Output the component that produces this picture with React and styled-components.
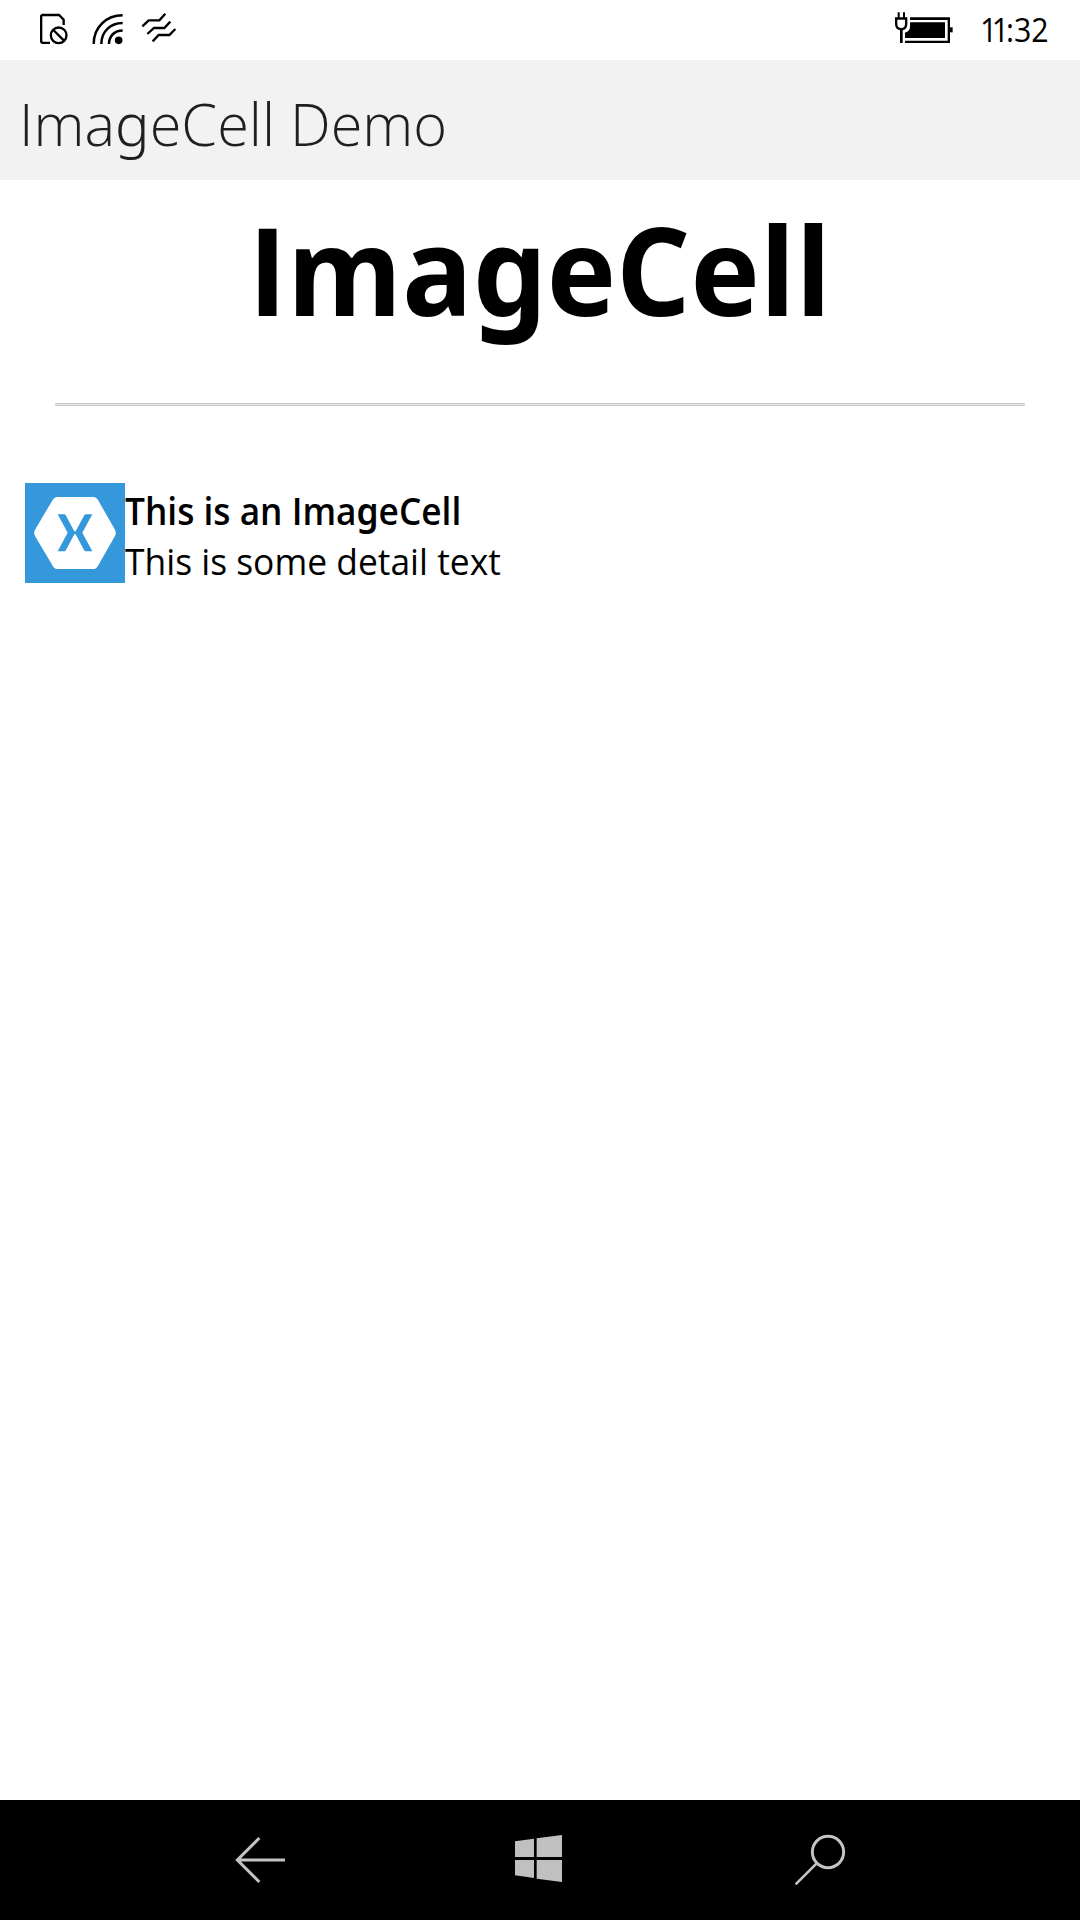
import React from "react";
import styled, { createGlobalStyle } from "styled-components";

const GlobalStyle = createGlobalStyle`
  body {
    margin: 0;
    background: #fff;
    font-family: "Open Sans", "Noto Sans", sans-serif;
    color: #000;
  }
`;

const Screen = styled.div`
  display: flex;
  flex-direction: column;
  height: 1920px;
  width: 1080px;
  overflow: hidden;
`;

const StatusBar = styled.header`
  display: flex;
  justify-content: space-between;
  height: 60px;
  padding: 0 32px 0 38px;
  flex: none;
`;

const IconGroup = styled.div`
  display: flex;
  gap: 26px;
`;

const Icon = styled.svg`
  display: block;
  flex: none;
  width: ${(p) => p.$w}px;
  height: ${(p) => p.$h}px;
`;

const Fitted = styled.span`
  display: block;
  width: max-content;
  white-space: nowrap;
  transform: scaleX(${(p) => p.$stretch || 1});
  transform-origin: ${(p) => p.$origin || "left"} center;
`;

/* Single-storey form of the letter g */
const G = styled.span`
  font-family: "Noto Sans", "Open Sans", sans-serif;
  line-height: 1;
`;

const Kern = styled.span`
  letter-spacing: ${(p) => p.$by}px;
`;

const Clock = styled.time`
  width: 68px;
  font-size: 33px;
  line-height: 60px;
`;

const TitleBar = styled.div`
  flex: none;
  height: 117px;
  padding: 3px 20px 0 19px;
  background: #f2f2f2;
  color: #1f1f1f;
  font-size: 59px;
  font-weight: 325;
  line-height: 120px;
`;

const Content = styled.main`
  flex: 1;
  display: flex;
  flex-direction: column;
`;

const Heading = styled.h1`
  display: flex;
  justify-content: center;
  margin: 0;
  font-size: 122px;
  font-weight: 700;
  line-height: 179px;
`;

const Rule = styled.div`
  height: 1px;
  margin: 44px 55px 77px;
  background: #e6e6e6;
  border-top: 1px solid #cbcbcb;
  border-bottom: 1px solid #cbcbcb;
`;

const Cell = styled.div`
  display: flex;
  height: 100px;
  padding-left: 25px;
`;

const CellText = styled.div`
  padding-top: 3px;
  font-size: 37px;
  line-height: 50px;
`;

const CellTitle = styled.div`
  font-weight: 600;
`;

const CellDetail = styled.div`
  font-weight: 400;
`;

const NavBar = styled.nav`
  flex: none;
  display: flex;
  justify-content: space-between;
  height: 120px;
  padding: 0 230px;
  background: #000;
`;

export default function App() {
  return (
    <>
      <GlobalStyle />
      <Screen>
        <StatusBar>
          <IconGroup>
            <Icon $w={152} $h={60} viewBox="54 0 456 180" fill="none" stroke="#000">
              <path d="M90 128.500H67L63.500 125V48L67 45H117L131 59V75" strokeWidth="7" />
              <circle cx="116" cy="106" r="23.500" strokeWidth="7" />
              <path d="M100 90L132 122" strokeWidth="7" />
              <path
                d="M221 132C221 82 259 46 308 46M244 132C244 95 271 69 308 69M267 132C267 108 284 91.500 308 91.500"
                strokeWidth="7.500"
              />
              <circle cx="296" cy="121" r="11.500" fill="#000" stroke="none" />
              <path
                d="M367 79L386 61H418L436 41M382 102L402 84H433L451 65M398 124L416 105H448L466 87"
                strokeWidth="7"
              />
            </Icon>
          </IconGroup>
          <IconGroup>
            <Icon $w={60} $h={60} viewBox="42 0 180 180">
              <path d="M90 52H210V129H75V122H203V60H90Z" />
              <path d="M90 67H195V114H75V98Q90 93 90 80Z" />
              <path d="M210 82H218V97H210Z" />
              <path d="M53 37H59V52H69V37H75V52H82V72Q82 88 68 91V129H60V91Q45 88 45 72V52H53Z" />
              <path d="M52 59H75V72Q75 84 63.500 84Q52 84 52 72Z" fill="#fff" />
            </Icon>
            <Clock>
              <Fitted $stretch={0.92}>
                <Kern $by={-6}>1</Kern>
                <Kern $by={-3.5}>1</Kern>:32
              </Fitted>
            </Clock>
          </IconGroup>
        </StatusBar>
        <TitleBar>
          <Fitted $stretch={0.978}>
            Ima<G>g</G>eCell Demo
          </Fitted>
        </TitleBar>
        <Content>
          <Heading>
            <Fitted $stretch={0.96} $origin="center">
              Ima<G>g</G>eCell
            </Fitted>
          </Heading>
          <Rule />
          <Cell>
            <Icon $w={100} $h={100} viewBox="45 39 300 300">
              <path fill="#3498db" d="M45 39H345V339H45Z" />
              <path
                fill="#fff"
                d="M143 81H249Q259 81 264 90L315 179Q320 188 315 198L264 287Q259 297 249 297H143Q133 297 128 287L75 198Q70 188 75 179L128 90Q133 81 143 81Z"
              />
              <path
                fill="#3498db"
                d="M143 133H162Q166 133 168 137L193 184H197L222 137Q224 133 228 133H247L217 188.500L247 244H228Q224 244 222 240L197 193H193L168 240Q166 244 162 244H143L173 188.500Z"
              />
            </Icon>
            <CellText>
              <CellTitle>
                <Fitted $stretch={0.953}>
                  This is an Ima<G>g</G>eCell
                </Fitted>
              </CellTitle>
              <CellDetail>
                <Fitted $stretch={0.957}>This is some detail text</Fitted>
              </CellDetail>
            </CellText>
          </Cell>
        </Content>
        <NavBar>
          <Icon $w={60} $h={120} viewBox="60 30 180 360" fill="none" stroke="#c3c3c3" strokeWidth="9">
            <path d="M148 144L82 210L148 276M82 210H225" />
          </Icon>
          <Icon $w={60} $h={120} viewBox="60 30 180 360" fill="#c0c0c0">
            <path d="M75 154L132 146V201H75ZM140 145L216 135V201H140ZM75 210H132V264L75 256ZM140 210H216V276L140 266Z" />
          </Icon>
          <Icon $w={60} $h={120} viewBox="60 30 180 360" fill="none" stroke="#c3c3c3" strokeWidth="9">
            <circle cx="174" cy="186" r="47" />
            <path d="M140 220L79 281" strokeLinecap="round" strokeWidth="8" />
          </Icon>
        </NavBar>
      </Screen>
    </>
  );
}
